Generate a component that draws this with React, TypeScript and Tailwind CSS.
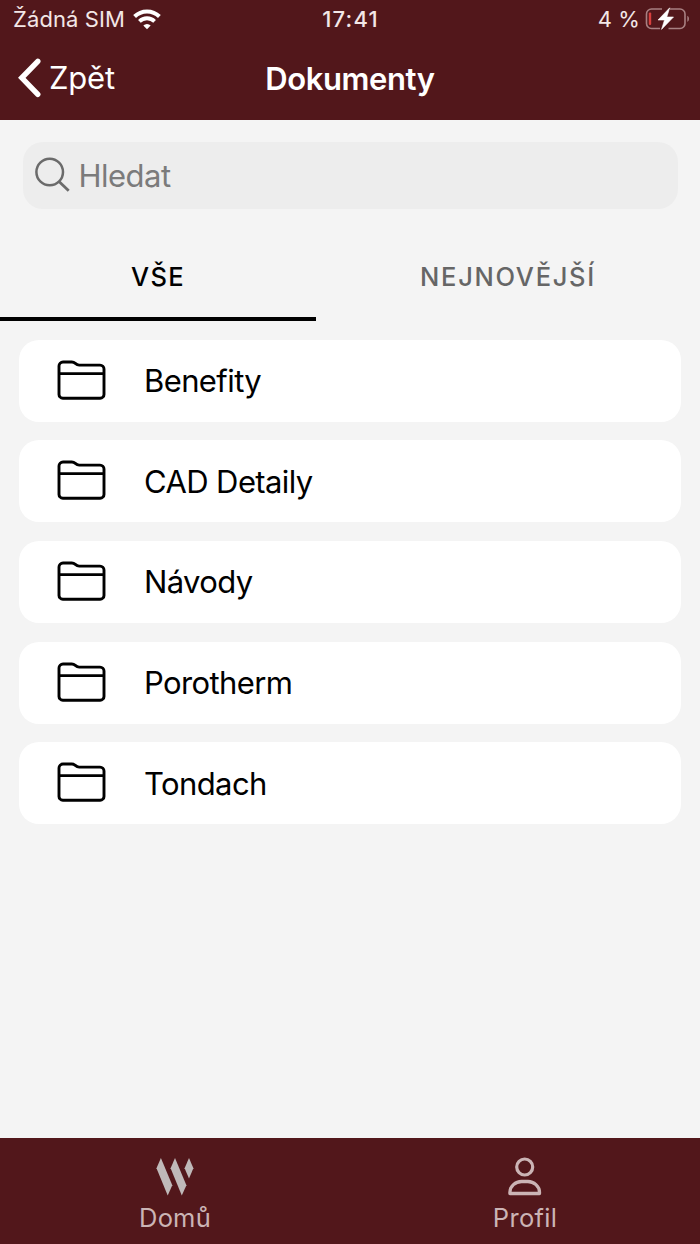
type IconProps = {
  className?: string;
};

const folders = ["Benefity", "CAD Detaily", "Návody", "Porotherm", "Tondach"];

function WifiIcon({ className }: IconProps) {
  return (
    <svg className={className} viewBox="0 0 28 21" fill="none">
      <path
        d="M1.600 7.500a17.600 17.600 0 0 1 24.800 0"
        stroke="currentColor"
        strokeWidth="4"
      />
      <path
        d="M6.400 12.400a10.800 10.800 0 0 1 15.200 0"
        stroke="currentColor"
        strokeWidth="3.800"
      />
      <path
        d="M10.300 16.400a5.300 5.300 0 0 1 7.400 0L14 20.300z"
        fill="currentColor"
      />
    </svg>
  );
}

function BatteryIcon({ className }: IconProps) {
  return (
    <svg className={className} viewBox="0 0 46 24" fill="none">
      <path
        d="M18 2H7.500a5 5 0 0 0-5 5v9.500a5 5 0 0 0 5 5H16M26 2H36a5 5 0 0 1 5 5v9.500a5 5 0 0 1-5 5H24.500"
        stroke="#a88082"
        strokeWidth="1.600"
      />
      <path d="M43.300 8.800c2.200.9 2.200 5.200 0 6.100z" fill="#a88082" />
      <rect x="4.800" y="5.500" width="2.400" height="12.500" rx="1" fill="#d8403e" />
      <path
        d="M25.700.800 14 13h6.500L17.500 22.400 29.500 10h-6.700z"
        fill="#fff"
        stroke="#fff"
        strokeWidth=".6"
        strokeLinejoin="round"
      />
    </svg>
  );
}

function BackIcon({ className }: IconProps) {
  return (
    <svg className={className} viewBox="0 0 24 40" fill="none">
      <path
        d="M20.800 3.300 4.800 19.800l16 16.500"
        stroke="currentColor"
        strokeWidth="5.400"
        strokeLinecap="round"
        strokeLinejoin="miter"
      />
    </svg>
  );
}

function SearchIcon({ className }: IconProps) {
  return (
    <svg className={className} viewBox="0 0 36 36" fill="none">
      <circle cx="14.700" cy="15" r="13.300" stroke="currentColor" strokeWidth="2.500" />
      <path d="m24 24.500 9.700 9.300" stroke="currentColor" strokeWidth="2.800" />
    </svg>
  );
}

function FolderIcon({ className }: IconProps) {
  return (
    <svg className={className} viewBox="0 0 50 40" fill="none">
      <path
        d="M2 13V6a4 4 0 0 1 4-4h8.800c1.700 0 2.500.5 3.500 1.400s2 1.700 3.900 1.700H43a4 4 0 0 1 4 4V34.400a3.800 3.800 0 0 1-3.800 3.800H5.800A3.800 3.800 0 0 1 2 34.400z"
        stroke="currentColor"
        strokeWidth="2.900"
        strokeLinejoin="round"
      />
      <path d="M2 13.700H47" stroke="currentColor" strokeWidth="2.700" />
    </svg>
  );
}

function HomeIcon({ className }: IconProps) {
  return (
    <svg className={className} viewBox="0 0 38 38" fill="currentColor">
      <path d="M4.900 0 .500 10.300 11.700 37.500 16.300 27.300z" />
      <path d="M19 0 14.600 10.300 25.800 37.500 30.400 27.300z" />
      <path d="M33 0 28.600 10.300 33 20.500 37.400 10.300z" />
    </svg>
  );
}

function ProfileIcon({ className }: IconProps) {
  return (
    <svg className={className} viewBox="0 0 34 38" fill="none">
      <circle cx="16.700" cy="9" r="8" stroke="currentColor" strokeWidth="3.200" />
      <path
        d="M1.900 35.500v-1.200c0-6 5.600-10.800 11.600-10.800h6.400c6 0 11.600 4.800 11.600 10.800v1.200z"
        stroke="currentColor"
        strokeWidth="3.300"
        strokeLinejoin="round"
      />
    </svg>
  );
}

function StatusBar() {
  return (
    <div className="grid h-[38px] grid-cols-3 items-center pl-[13px] pr-[10px] text-[22px] text-[#f3e7e7]">
      <div className="flex items-center gap-[9px]">
        <span className="w-[111px] whitespace-nowrap tracking-[0.1px]">Žádná SIM</span>
        <WifiIcon className="h-[21px] w-7 text-white" />
      </div>
      <span className="pr-[2px] text-center font-medium tracking-[1.2px]">17:41</span>
      <div className="flex items-center justify-end gap-1">
        <span className="whitespace-nowrap tracking-[0.1px]">4 %</span>
        <BatteryIcon className="h-6 w-[46px]" />
      </div>
    </div>
  );
}

function NavBar() {
  return (
    <div className="grid h-20 grid-cols-3 items-center px-[17px] text-[31px] text-white">
      <button className="flex items-center gap-2">
        <BackIcon className="h-10 w-6" />
        <span className="pb-px tracking-[-0.2px]">Zpět</span>
      </button>
      <h1 className="text-center font-semibold tracking-[-0.4px]">Dokumenty</h1>
    </div>
  );
}

export default function App() {
  return (
    <div className="flex h-[1244px] w-[700px] flex-col overflow-hidden bg-[#f4f4f4] font-['Inter',sans-serif] leading-none">
      <header className="h-[119.500px] shrink-0 bg-[#52171b]">
        <StatusBar />
        <NavBar />
      </header>

      <main className="flex-1">
        <div className="mx-[22.500px] mt-[22px] flex h-[67px] items-center gap-[8px] rounded-[20px] bg-[#ededed] pl-3 text-[31px] text-[#7b7b7b]">
          <SearchIcon className="size-9 text-[#6b6b6b]" />
          <span className="tracking-[-0.5px]">Hledat</span>
        </div>

        <div className="mt-[22px] flex h-[90px] text-[25.500px] font-medium">
          <button className="flex w-[316px] items-center justify-center border-b-4 border-black pt-[6px] text-black">
            <span className="tracking-[1.300px]">VŠE</span>
          </button>
          <button className="flex flex-1 items-center justify-center border-b-4 border-transparent pt-[6px] text-[#666666]">
            <span className="tracking-[1.700px]">NEJNOVĚJŠÍ</span>
          </button>
        </div>

        <ul className="mt-[19px] flex flex-col gap-[18.700px] px-[19px]">
          {folders.map((name) => (
            <li
              key={name}
              className="flex h-[82px] items-center gap-[37px] rounded-[20px] bg-white pl-[38px] text-[31px] text-black"
            >
              <FolderIcon className="mb-[2px] h-10 w-[50px]" />
              <span className="tracking-[-0.6px]">{name}</span>
            </li>
          ))}
        </ul>
      </main>

      <nav className="grid h-[106.500px] shrink-0 grid-cols-2 bg-[#52171b] text-[25.500px] text-[#cbb4b5]">
        <button className="flex flex-col items-center pt-5">
          <HomeIcon className="h-[38px] w-[38px] text-[#bfb9b9]" />
          <span className="mt-[9px] tracking-[0.2px]">Domů</span>
        </button>
        <button className="flex flex-col items-center pt-5">
          <ProfileIcon className="h-[38px] w-[34px] overflow-visible" />
          <span className="mt-[9px] tracking-[0.3px]">Profil</span>
        </button>
      </nav>
    </div>
  );
}
